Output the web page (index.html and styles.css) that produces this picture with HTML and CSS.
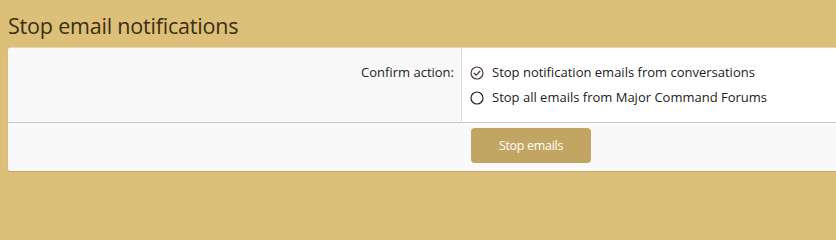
FILE: index.html
```html
<!DOCTYPE html>
<html lang="en">
<head>
<meta charset="utf-8">
<title>Stop email notifications</title>
<link rel="stylesheet" href="styles.css">
</head>
<body>
<h1 class="title">Stop email notifications</h1>
<div class="block">
  <div class="row">
    <div class="label">Confirm action:</div>
    <div class="options">
      <label class="choice">
        <svg class="radio" viewBox="0 0 14 14" width="14" height="14"><circle cx="7" cy="7" r="6" fill="none" stroke="#4b3a3a" stroke-width="1.2"/><path d="M4.2 7.2 L6.2 9.1 L9.9 5.2" fill="none" stroke="#4b3a3a" stroke-width="1.3" stroke-linecap="round" stroke-linejoin="round"/></svg>
        <span>Stop notification emails from conversations</span>
      </label>
      <label class="choice">
        <svg class="radio" viewBox="0 0 14 14" width="14" height="14"><circle cx="7" cy="7" r="6" fill="none" stroke="#222" stroke-width="1.2"/></svg>
        <span>Stop all emails from Major Command Forums</span>
      </label>
    </div>
  </div>
  <div class="footer">
    <div class="footer-spacer"></div>
    <div class="footer-actions">
      <button class="button" type="button">Stop emails</button>
    </div>
  </div>
</div>
</body>
</html>
```
FILE: styles.css
```css
html, body {
  margin: 0;
  padding: 0;
}
body {
  background: #dcbf78;
  font-family: "Open Sans", "Noto Sans", sans-serif;
  color: #222;
  overflow: hidden;
  width: 836px;
  height: 202px;
}
.title {
  margin: 0;
  padding: 12px 8px 0 8px;
  height: 47px;
  box-sizing: border-box;
  font-size: 21.5px;
  line-height: 28px;
  font-weight: 400;
  color: #3b2e13;
  letter-spacing: -0.2px;
}
.block {
  margin-left: 8px;
  width: 860px;
  background: #fff;
  border-top: 1px solid #e6d7ac;
  border-radius: 3px 0 0 3px;
  box-shadow: 0 1px 1px #c4a867;
  font-size: 13px;
}
.row {
  display: flex;
}
.label {
  width: 446px;
  flex: none;
  background: #f9f9f9;
  border-right: 1px solid #dadada;
  text-align: right;
  padding: 12px 7px 12px 0;
  line-height: 25px;
  color: #222;
  border-radius: 3px 0 0 0;
}
.options {
  flex: 1;
  padding: 12px 8px 12px 8px;
  display: flex;
  flex-direction: column;
}
.choice {
  display: flex;
  align-items: center;
  gap: 8px;
  height: 25px;
  line-height: 25px;
  color: #222;
}
.radio {
  flex: none;
}
.footer {
  display: flex;
  background: #f9f9f9;
  border-top: 1px solid #c8c8c8;
  padding: 5px 0 8px 0;
  border-radius: 0 0 0 3px;
}
.footer-spacer {
  width: 455px;
  flex: none;
}
.footer-actions {
  padding-left: 8px;
}
.button {
  width: 120px;
  height: 35px;
  border: none;
  border-radius: 4px;
  background: #c3a563;
  color: #fff;
  font-family: "Open Sans", "Noto Sans", sans-serif;
  font-size: 12.5px;
  letter-spacing: -0.3px;
  padding: 0;
}
```
